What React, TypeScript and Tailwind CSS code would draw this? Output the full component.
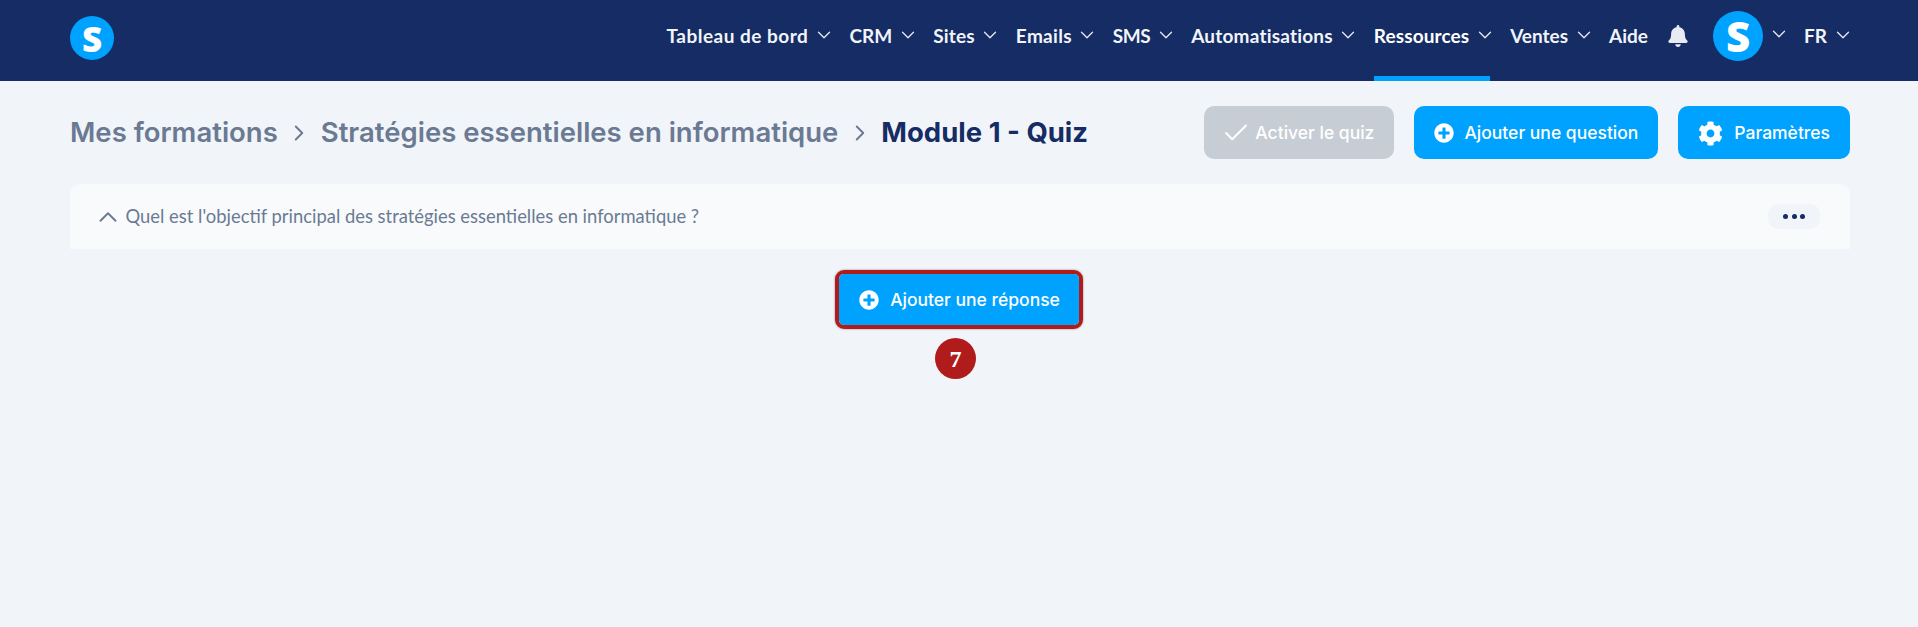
import { Check, ChevronDown, ChevronRight, ChevronUp } from "lucide-react";
import { FaBell, FaCog, FaPlusCircle } from "react-icons/fa";

const NAV_ITEMS = [
  { label: "Tableau de bord", caret: true, tracking: "tracking-[0.5px]" },
  { label: "CRM", caret: true, tracking: "" },
  { label: "Sites", caret: true, tracking: "tracking-[0.2px]" },
  { label: "Emails", caret: true, tracking: "tracking-[0.3px]" },
  { label: "SMS", caret: true, tracking: "tracking-[-0.5px]" },
  { label: "Automatisations", caret: true, tracking: "tracking-[0.2px]" },
  { label: "Ressources", caret: true, active: true, tracking: "tracking-[0.1px]" },
  { label: "Ventes", caret: true, tracking: "" },
  { label: "Aide", caret: false, tracking: "" },
];

function Caret() {
  return <ChevronDown className="-mr-[5.5px] ml-[4.5px] h-[22px] w-[22px] -translate-y-[2px] text-[#e8ecf2]" strokeWidth={1.4} />;
}

export default function App() {
  return (
    <div className="min-h-[627px] bg-[#f1f4f9] font-['Inter',sans-serif]">
      <header className="flex h-[81px] items-center bg-[#152c64] pr-[70px] pl-[70px]">
        <div className="mb-[5px] flex h-[44px] w-[44px] items-center justify-center rounded-full bg-[#00a2ff] font-['Open_Sans',sans-serif] text-[35px] leading-none font-extrabold text-white">
          S
        </div>
        <nav className="ml-auto flex h-full items-center gap-[20px] font-['Lato',sans-serif] text-[19px] font-bold text-[#f1f4f9]">
          {NAV_ITEMS.map((item) => (
            <div
              key={item.label}
              className={
                item.active
                  ? "flex h-full items-center border-b-[5px] border-[#00a2ff] pb-[3px] text-white"
                  : "flex h-full items-center pb-[8px]"
              }
            >
              <span className={item.tracking}>{item.label}</span>
              {item.caret && <Caret />}
            </div>
          ))}
          <FaBell className="mb-[9px] h-[22px] w-[20px] text-[#e8ecf2]" />
          <div className="ml-[5px] flex h-full items-center pb-[9px]">
            <div className="flex h-[50px] w-[50px] items-center justify-center rounded-full bg-[#00a2ff] font-['Open_Sans',sans-serif] text-[42px] leading-none font-extrabold text-white">
              S
            </div>
            <Caret />
          </div>
          <div className="flex h-full items-center pb-[8px]">
            FR
            <Caret />
          </div>
        </nav>
      </header>

      <main className="pr-[68px] pl-[70px]">
        <div className="flex h-[103px] items-center justify-between">
          <div className="flex items-center text-[27.5px] font-semibold text-[#6b7a93]">
            <span>Mes formations</span>
            <ChevronRight className="mx-[8.5px] h-[26px] w-[26px]" strokeWidth={1.75} />
            <span>Stratégies essentielles en informatique</span>
            <ChevronRight className="mx-[8.5px] h-[26px] w-[26px]" strokeWidth={1.75} />
            <span className="font-bold text-[#152c64]">Module 1 - Quiz</span>
          </div>
          <div className="flex items-center gap-[20px] text-[17.5px] font-medium text-white">
            <button className="flex h-[53px] items-center gap-[4px] rounded-[10px] bg-[#c7cdd4] pt-[1px] pr-[20px] pl-[17px]">
              <Check className="h-[30px] w-[30px]" strokeWidth={1.5} />
              Activer le quiz
            </button>
            <button className="flex h-[53px] items-center gap-[10px] rounded-[10px] bg-[#00a2ff] px-[20px] pt-[1px]">
              <FaPlusCircle className="h-[20px] w-[20px]" />
              Ajouter une question
            </button>
            <button className="flex h-[53px] items-center gap-[11px] rounded-[10px] bg-[#00a2ff] px-[20px] pt-[1px]">
              <FaCog className="h-[25px] w-[25px]" />
              Paramètres
            </button>
          </div>
        </div>

        <section className="flex h-[65px] items-center justify-between rounded-t-[10px] bg-[#f8fafc] pr-[30px] pl-[22.5px]">
          <div className="flex items-center gap-[3px] font-['Lato',sans-serif] text-[18.4px] text-[#6b7a93]">
            <ChevronUp className="h-[30px] w-[30px]" strokeWidth={1.5} />
            Quel est l'objectif principal des stratégies essentielles en informatique ?
          </div>
          <div className="flex h-[25px] w-[52px] items-center justify-center gap-[3.5px] rounded-[10px] bg-[#f1f4f9]">
            <span className="h-[5px] w-[5px] rounded-full bg-[#152c64]" />
            <span className="h-[5px] w-[5px] rounded-full bg-[#152c64]" />
            <span className="h-[5px] w-[5px] rounded-full bg-[#152c64]" />
          </div>
        </section>

        <div className="mt-[21px] flex flex-col items-center">
          <div className="mr-[2px] rounded-[9px] border-[4px] border-[#b01c1c] shadow-[0_0_2px_rgba(0,0,0,0.5)]">
            <button className="flex h-[51px] items-center gap-[11px] rounded-[5px] bg-[#00a2ff] pt-[1px] pr-[19px] pl-[20px] text-[17.5px] font-medium text-white">
              <FaPlusCircle className="h-[20px] w-[20px]" />
              Ajouter une réponse
            </button>
          </div>
          <div className="mt-[9px] mr-[9px] flex h-[41px] w-[41px] items-center justify-center rounded-full bg-[#b01c1c] font-['Liberation_Serif',serif] text-[24px] font-bold text-white">
            7
          </div>
        </div>
      </main>
    </div>
  );
}
